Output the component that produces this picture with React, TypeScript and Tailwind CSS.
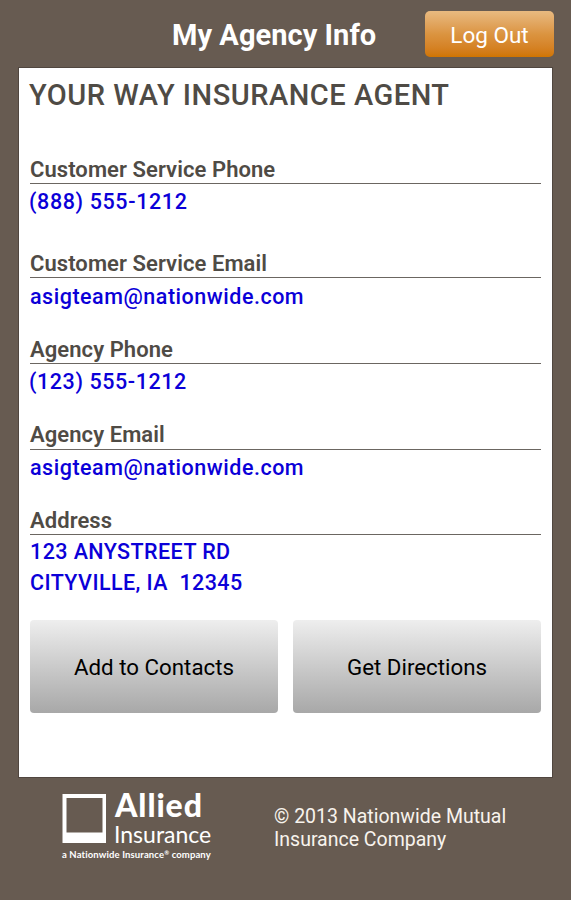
import React from "react";

const contactFields = [
  { label: "Customer Service Phone", lines: ["(888) 555-1212"], spacing: "h-[94px]", offset: "pt-[2px] -ml-px tracking-[0.62px]", leading: "leading-[26px]" },
  { label: "Customer Service Email", lines: ["asigteam@nationwide.com"], spacing: "h-[86px]", offset: "pt-[3px] tracking-[0.52px]", leading: "leading-[25px]" },
  { label: "Agency Phone", lines: ["(123) 555-1212"], spacing: "h-[86px]", offset: "pt-[2px] -ml-px tracking-[0.57px]", leading: "leading-[25px]" },
  { label: "Agency Email", lines: ["asigteam@nationwide.com"], spacing: "h-[85px]", offset: "pt-[2px] tracking-[0.52px]", leading: "leading-[24px]" },
  { label: "Address", lines: ["123 ANYSTREET RD", "CITYVILLE, IA  12345"], spacing: "h-[112px]", offset: "pt-px tracking-[0.42px]", leading: "leading-[26px]" },
];

const actions = ["Add to Contacts", "Get Directions"];

const Header = () => {
  return (
    <header className="grid h-[68px] grid-cols-[172px_253px_129px] pt-[11px]">
      <h1 className="col-start-2 whitespace-nowrap text-[29px] font-bold leading-[48px] tracking-[0.05px] text-white">
        My Agency Info
      </h1>
      <button
        type="button"
        className="h-[46px] rounded-[5px] bg-linear-to-b from-[#e8ba80] via-[#db9440] to-[#d07500] pt-[3px] text-[22.5px] text-white"
      >
        Log Out
      </button>
    </header>
  );
};

const ContactField = ({ label, lines, spacing, offset, leading }: (typeof contactFields)[number]) => {
  return (
    <section className={spacing}>
      <h3 className={`${leading} h-[27px] border-b border-[#6b6661] text-[22px] font-semibold tracking-[0.07px] text-[#4f4b45]`}>
        {label}
      </h3>
      <div className={`${offset} text-[21.5px] font-medium leading-[31px] text-[#0b00d8]`}>
        {lines.map((line) => (
          <a href="#" key={line} className="block whitespace-pre">
            {line}
          </a>
        ))}
      </div>
    </section>
  );
};

const Logo = () => {
  return (
    <div className="w-[212px] pl-[62px] pt-[13px] font-[Lato,sans-serif] text-white">
      <div className="flex h-[57px]">
        <svg className="mt-[3px] h-[50px] w-[44px] shrink-0" viewBox="0 0 44 50" fill="currentColor">
          <path fillRule="evenodd" d="M0.5 1H44V50H0.5ZM4.5 5V39.5H40.5V5Z" />
        </svg>
        <div className="ml-2">
          <div className="ml-px mt-[2px] h-[29px] text-[32px] font-black leading-[26px] tracking-[0.9px]">Allied</div>
          <div className="text-[23px] leading-[26px]">Insurance</div>
        </div>
      </div>
      <div className="whitespace-nowrap text-[9.5px] font-bold leading-[16px] tracking-[0.12px]">
        a Nationwide Insurance<sup className="text-[6px]">®</sup> company
      </div>
    </div>
  );
};

const App = () => {
  return (
    <div className="h-[900px] w-[571px] overflow-hidden bg-[#675b51] font-[Roboto,sans-serif]">
      <Header />
      <main className="mx-[19px] h-[709px] bg-white px-[11px] pt-[10px] shadow-[0_0_0_1px_#50463f]">
        <h2 className="-ml-px h-[79px] whitespace-nowrap text-[29px] font-medium leading-[34px] tracking-[0.52px] text-[#4f4b45]">
          YOUR WAY INSURANCE AGENT
        </h2>
        {contactFields.map((field, index) => (
          <ContactField key={index} {...field} />
        ))}
        <div className="grid grid-cols-2 gap-[15px]">
          {actions.map((action) => (
            <button
              type="button"
              key={action}
              className="h-[93px] rounded-[4px] bg-linear-to-b from-[#eeeeee] to-[#a8a8a8] pt-[2px] text-[22.3px] text-black"
            >
              {action}
            </button>
          ))}
        </div>
      </main>
      <footer className="flex">
        <Logo />
        <p className="ml-[62px] pt-[28px] text-[19.5px] leading-[23px] text-[#f8f3ed]">
          © 2013 Nationwide Mutual
          <br />
          Insurance Company
        </p>
      </footer>
    </div>
  );
};

export default App;
